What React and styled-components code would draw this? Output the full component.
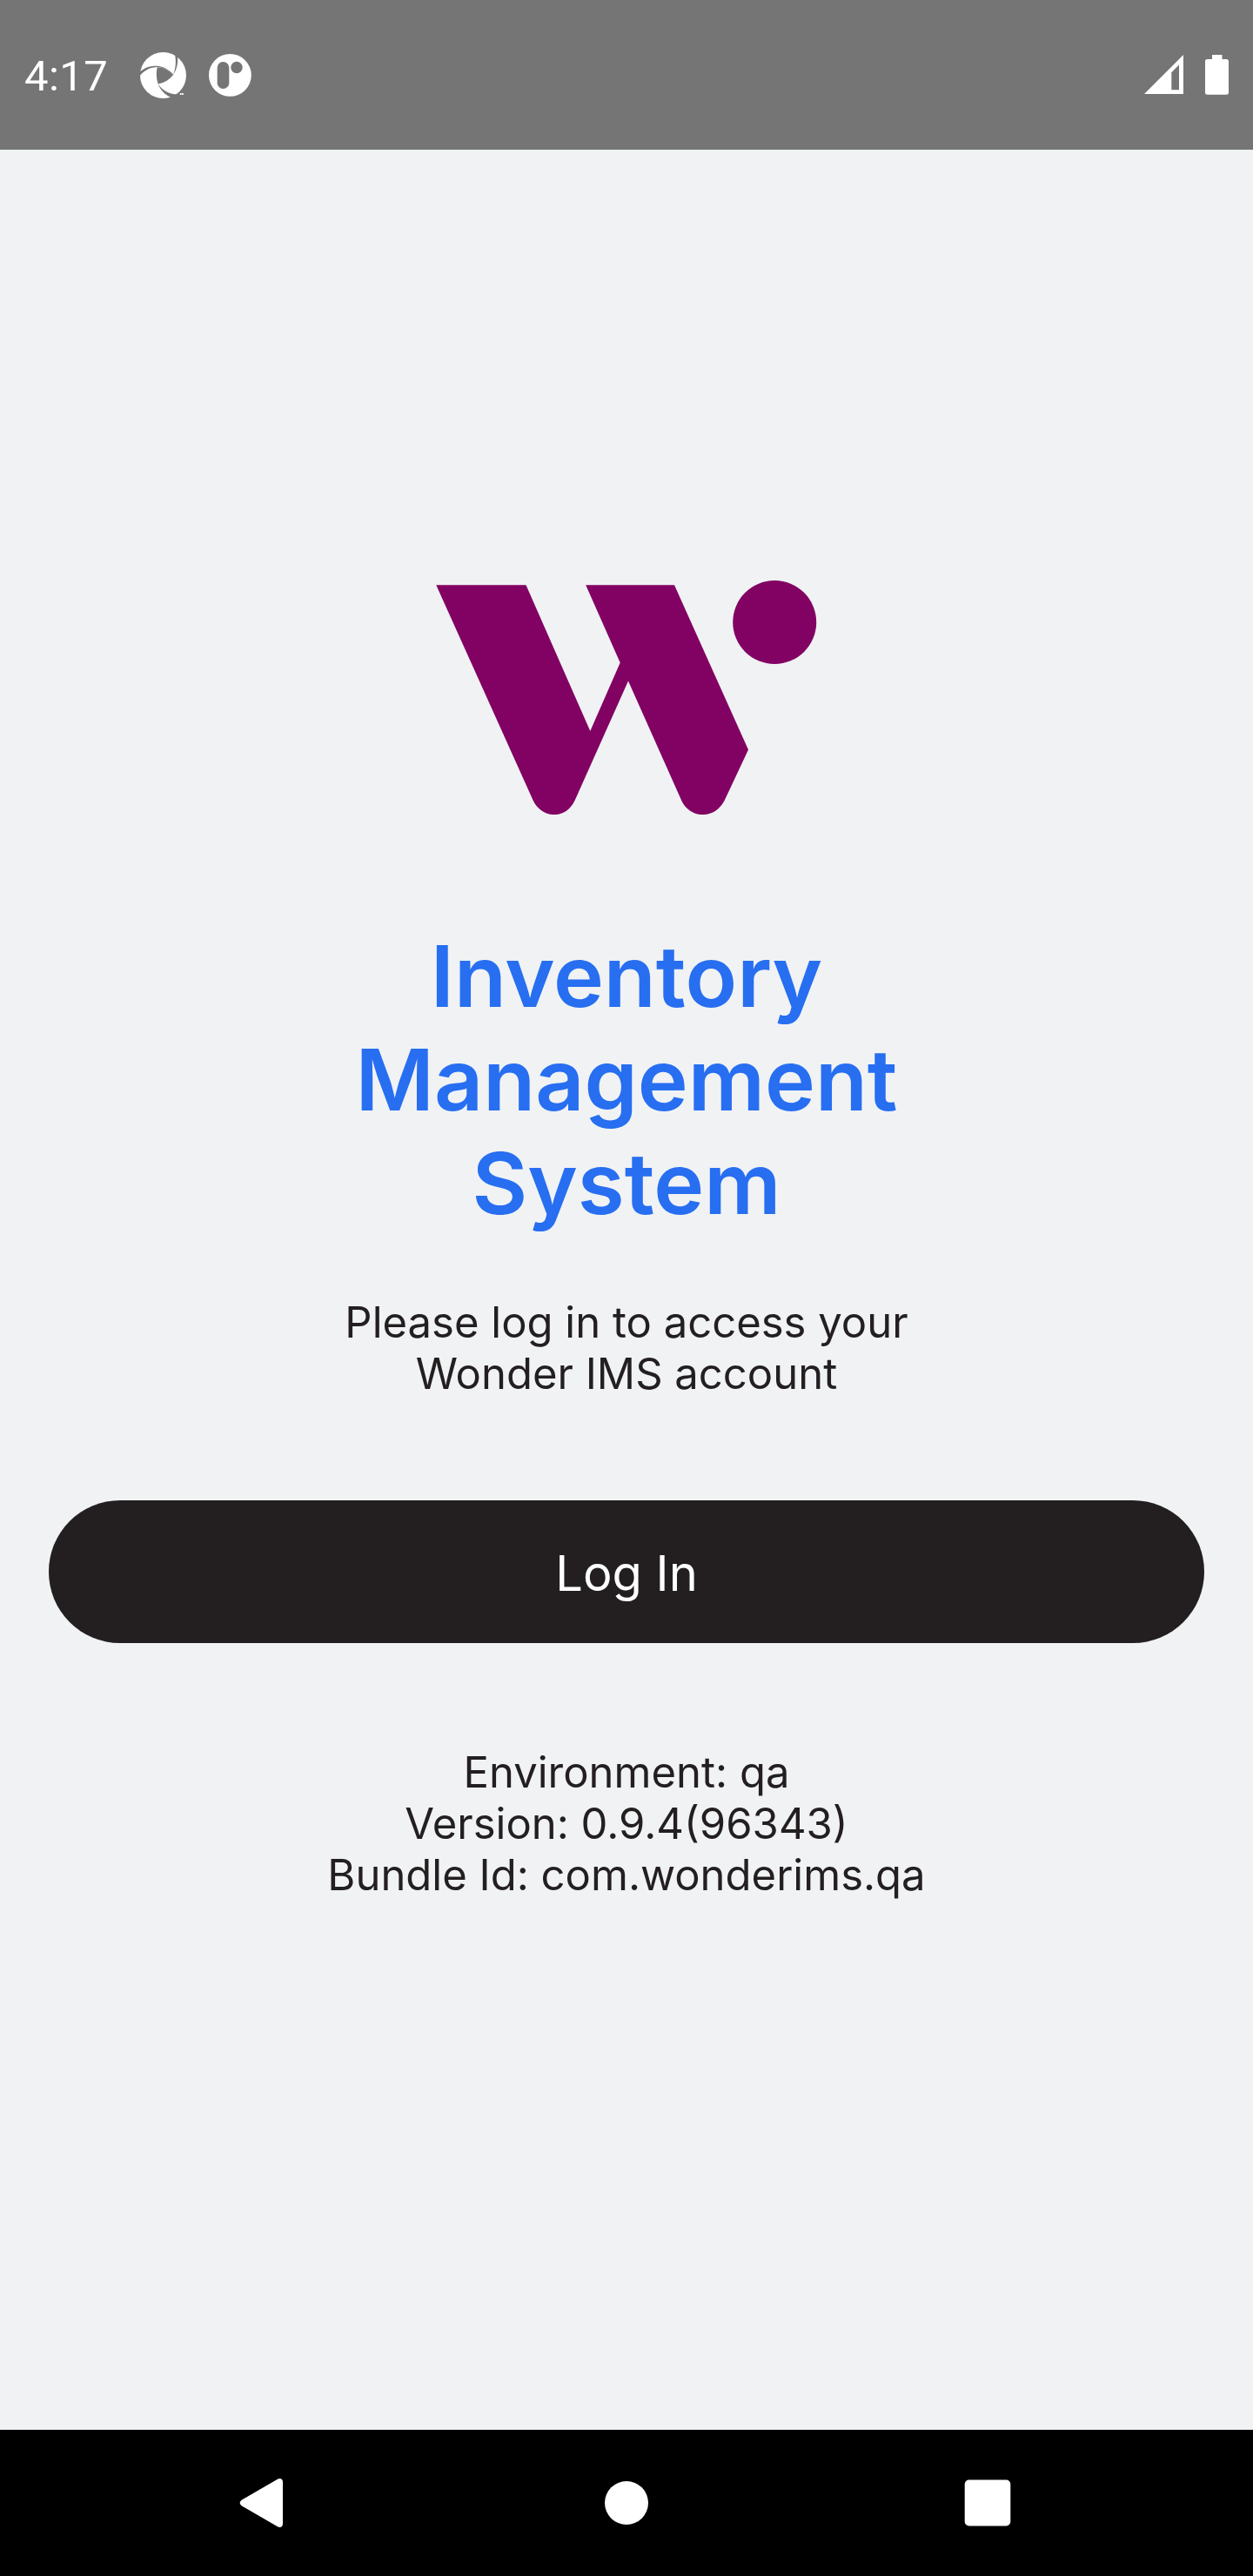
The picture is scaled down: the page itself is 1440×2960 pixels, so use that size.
import React from "react";
import styled, { createGlobalStyle } from "styled-components";

const GlobalStyle = createGlobalStyle`
  *, *::before, *::after { box-sizing: border-box; }
  body { margin: 0; background: #f0f2f4; }
`;

const Screen = styled.div`
  display: flex;
  flex-direction: column;
  width: 1440px;
  height: 2960px;
  background: #f0f2f4;
  font-family: Inter, "Liberation Sans", sans-serif;
`;

const StatusBar = styled.header`
  display: flex;
  justify-content: space-between;
  height: 172px;
  padding: 0 28px;
  background: #757575;
  color: #fff;
`;

const StatusGroup = styled.div`
  display: flex;
  align-items: flex-start;
  gap: ${(p) => p.$gap}px;
`;

const Clock = styled.span`
  width: 107px;
  margin-top: 58px;
  font-family: Roboto, sans-serif;
  font-size: 49px;
  line-height: 60px;
  letter-spacing: 0.4px;
`;

const Glyph = styled.svg`
  display: block;
  flex: none;
  width: ${(p) => p.$w}px;
  height: ${(p) => p.$h}px;
  margin-top: ${(p) => p.$top || 0}px;
  fill: ${(p) => p.$fill || "#fff"};
`;

const Main = styled.main`
  display: flex;
  flex: 1;
  flex-direction: column;
  align-items: center;
  padding: 494px 56px 0;
  text-align: center;
  color: #231f20;
`;

const Title = styled.h1`
  width: 720px;
  margin: 126px 0 0;
  color: #276ef1;
  font-size: 98px;
  font-weight: 600;
  line-height: 119px;
`;

const Copy = styled.p`
  margin: ${(p) => p.$top}px 0 0;
  font-size: 49px;
  line-height: 59px;
`;

const Line = styled.span`
  display: block;
`;

const LoginButton = styled.button`
  width: 100%;
  height: 164px;
  margin-top: 116px;
  padding: 4px 0 0;
  border: 0;
  border-radius: 82px;
  background: #231f20;
  color: #fff;
  font-family: inherit;
  font-size: 56px;
  line-height: 68px;
`;

const NavBar = styled.nav`
  display: flex;
  align-items: center;
  justify-content: space-between;
  height: 168px;
  padding: 0 270px;
  background: #000;
`;

export default function App() {
  return (
    <>
      <GlobalStyle />
      <Screen>
        <StatusBar>
          <StatusGroup $gap={26}>
            <Clock>4:17</Clock>
            <Glyph viewBox="161 60 53 53" $w={53} $h={53} $top={60}>
              <circle cx="187.500" cy="86.500" r="26.500" />
              <path
                fill="#757575"
                d="M180.700 77.300Q190.500 77.500 199.300 85.700Q192.500 94.500 181.700 96.500Q178.500 87 180.700 77.300Z"
              />
              <path
                fill="#757575"
                d="M160 83C168 76.500 174 75.800 180 75.800C188 76.300 194 80 199.300 85.700C194 81 188 77.500 181 77C173 77.300 166.500 80 160 88Z"
              />
              <path
                fill="#757575"
                d="M200.300 60C202.800 69 202.300 78 199 85.700C203.300 80 204.500 73 204.200 65.500L206.500 63Z"
              />
              <path
                fill="#757575"
                d="M181.500 96.300C184.500 104 189.500 109 196.500 112L200 114L206 108.500C196 109 187.500 105 181.500 96.300Z"
              />
              <path d="M206.800 107h1.800v2h-1.800zM209.100 107h1.700v2h-1.700z" />
            </Glyph>
            <Glyph viewBox="240 62 49 49" $w={49} $h={49} $top={62}>
              <circle cx="264.400" cy="86.400" r="24.400" />
              <rect x="249.700" y="71" width="13.600" height="31" rx="6.800" fill="#757575" />
              <circle cx="272" cy="77.500" r="6.700" fill="#757575" />
            </Glyph>
          </StatusGroup>
          <StatusGroup $gap={25}>
            <Glyph viewBox="1315 63 45 45" $w={45} $h={45} $top={63}>
              <path fillRule="evenodd" d="M1315 108L1360 63V108ZM1346.300 103.300H1355V74.500L1346.300 83.200Z" />
            </Glyph>
            <Glyph viewBox="1385 63 27 46" $w={27} $h={46} $top={63}>
              <path d="M1393 63h11.500v5h5a2.500 2.500 0 0 1 2.500 2.500v35.700a2.500 2.500 0 0 1-2.500 2.500h-22a2.500 2.500 0 0 1-2.500-2.500v-35.700a2.500 2.500 0 0 1 2.500-2.500h5.500z" />
            </Glyph>
          </StatusGroup>
        </StatusBar>

        <Main>
          <Glyph viewBox="501 666 438 270" $w={438} $h={270} $fill="#820263">
            <path d="M501.300 672.300H604.500L678.300 840L712.700 761.500L673.200 672.300H775L860 861.500L832.500 920C821 942 793 941 783.300 920L722 782.500L660.500 920C650 942 623 941 612.800 920Z" />
            <circle cx="890.200" cy="715" r="48" />
          </Glyph>
          <Title>Inventory Management System</Title>
          <Copy $top={71}>
            <Line>Please log in to access your</Line>
            <Line>Wonder IMS account</Line>
          </Copy>
          <LoginButton>Log In</LoginButton>
          <Copy $top={119}>
            <Line>Environment: qa</Line>
            <Line>Version: 0.9.4(96343)</Line>
            <Line>Bundle Id: com.wonderims.qa</Line>
          </Copy>
        </Main>

        <NavBar>
          <Glyph viewBox="270 2846 60 60" $w={60} $h={60}>
            <path d="M278 2872.500L319 2848.700C322 2847 325 2848.500 325 2852V2900C325 2903.500 322 2905 319 2903.300L278 2879.500C275 2877.500 275 2874.500 278 2872.500Z" />
          </Glyph>
          <Glyph viewBox="0 0 60 60" $w={60} $h={60}>
            <circle cx="30" cy="30" r="25" />
          </Glyph>
          <Glyph viewBox="1110 2846 60 60" $w={60} $h={60} overflow="visible">
            <rect x="1108.700" y="2849.500" width="52.600" height="53" rx="5" />
          </Glyph>
        </NavBar>
      </Screen>
    </>
  );
}
